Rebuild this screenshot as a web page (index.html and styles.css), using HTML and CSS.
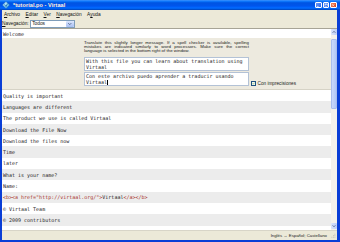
FILE: index.html
```html
<!DOCTYPE html>
<html>
<head>
  <link rel="stylesheet" href="styles.css">
</head>
<body>
  <div class="window">
    <div class="titlebar">
      <svg class="app-icon" viewBox="0 0 8 8">
        <defs>
          <linearGradient id="iconGrad" x1="0" y1="0" x2="1" y2="1">
            <stop offset="0%" stop-color="#e8fbff"/>
            <stop offset="100%" stop-color="#41b4e8"/>
          </linearGradient>
        </defs>
        <path d="M4 0.5 L7.5 4 L4 7.5 L0.5 4 Z" fill="url(#iconGrad)" stroke="#1d6fb8" stroke-width="0.5"/>
        <path d="M2.5 3.5 L4 5.5 L5.6 2.6" fill="none" stroke="#0b4f9a" stroke-width="0.7"/>
      </svg>
      <span class="title">*tutorial.po - Virtaal</span>
      <div class="caption-buttons">
        <span class="cap">
          <svg viewBox="0 0 7 7"><rect x="1.5" y="4.6" width="2.6" height="0.9" fill="#fff"/></svg>
        </span>
        <span class="cap">
          <svg viewBox="0 0 7 7"><rect x="1.6" y="1.6" width="3.8" height="3.8" fill="none" stroke="#fff" stroke-width="0.6"/><rect x="1.6" y="1.4" width="3.8" height="0.9" fill="#fff"/></svg>
        </span>
        <span class="cap close">
          <svg viewBox="0 0 7 7"><path d="M1.8 1.8 L5.2 5.2 M5.2 1.8 L1.8 5.2" stroke="#fff" stroke-width="0.9"/></svg>
        </span>
      </div>
    </div>

    <div class="frame">
      <div class="menubar">
        <span class="menu-item"><u>A</u>rchivo</span>
        <span class="menu-item"><u>E</u>ditar</span>
        <span class="menu-item"><u>V</u>er</span>
        <span class="menu-item"><u>N</u>avegación</span>
        <span class="menu-item">A<u>y</u>uda</span>
      </div>

      <div class="toolbar">
        <span class="nav-label"><u>N</u>avegación:</span>
        <div class="combo">
          <span>Todos</span>
          <span class="combo-drop">
            <svg viewBox="0 0 8 6"><path d="M2.3 2 L4 3.7 L5.7 2" fill="none" stroke="#4d6185" stroke-width="0.9"/></svg>
          </span>
        </div>
      </div>

      <div class="main">
        <div class="unit-list">
          <div class="row first">Welcome</div>

          <div class="editor">
            <div class="editor-col">
              <div class="hint">
                <span class="hint-line full">Translate this slightly longer message. If a spell checker is available, spelling</span>
                <span class="hint-line full">mistakes are indicated similarly to word processors. Make sure the correct</span>
                <span class="hint-line">language is selected in the bottom right of the window.</span>
              </div>
              <div class="textbox source">With this file you can learn about translation using Virtaal</div>
              <div class="textbox target">Con este archivo puedo aprender a traducir usando Virtaal<span class="caret"></span></div>
            </div>
            <label class="fuzzy">
              <span class="checkbox">
                <svg viewBox="0 0 6 6"><path d="M1.2 3 L2.5 4.4 L4.9 1.5" fill="none" stroke="#21a121" stroke-width="0.9"/></svg>
              </span>
              Con imprecisiones
            </label>
          </div>

          <div class="row">Quality is important</div>
          <div class="row alt">Languages are different</div>
          <div class="row">The product we use is called Virtaal</div>
          <div class="row alt">Download the File Now</div>
          <div class="row">Download the files now</div>
          <div class="row alt">Time</div>
          <div class="row">later</div>
          <div class="row alt">What is your name?</div>
          <div class="row">Name:</div>
          <div class="row alt"><span class="tag">&lt;b&gt;&lt;a href="http://virtaal.org/"&gt;</span>Virtaal<span class="tag">&lt;/a&gt;&lt;/b&gt;</span></div>
          <div class="row">© Virtaal Team</div>
          <div class="row alt">© 2009 contributors</div>
        </div>

        <div class="vscroll">
          <span class="scroll-btn">
            <svg viewBox="0 0 6 6"><path d="M1.6 3.8 L3 2.3 L4.4 3.8" fill="none" stroke="#4d6185" stroke-width="0.8"/></svg>
          </span>
          <span class="scroll-thumb"></span>
          <span class="scroll-space"></span>
          <span class="scroll-btn">
            <svg viewBox="0 0 6 6"><path d="M1.6 2.3 L3 3.8 L4.4 2.3" fill="none" stroke="#4d6185" stroke-width="0.8"/></svg>
          </span>
        </div>
      </div>

      <div class="statusbar">
        <span class="status-text">Inglés → Español; Castellano</span>
        <svg class="grip" viewBox="0 0 6 6">
          <rect x="4.5" y="0.8" width="0.8" height="0.8" fill="#b6b3a6"/>
          <rect x="3" y="2.3" width="0.8" height="0.8" fill="#b6b3a6"/>
          <rect x="4.5" y="2.3" width="0.8" height="0.8" fill="#b6b3a6"/>
          <rect x="1.5" y="3.8" width="0.8" height="0.8" fill="#b6b3a6"/>
          <rect x="3" y="3.8" width="0.8" height="0.8" fill="#b6b3a6"/>
          <rect x="4.5" y="3.8" width="0.8" height="0.8" fill="#b6b3a6"/>
        </svg>
      </div>
    </div>
  </div>
</body>
</html>
```

FILE: styles.css
```css
* {
  margin: 0;
  padding: 0;
  box-sizing: border-box;
}

body {
  width: 340px;
  height: 242px;
  overflow: hidden;
  font-family: "Liberation Sans", Arial, sans-serif;
  background: #0a3ed6;
}

.window {
  width: 340px;
  height: 242px;
  display: flex;
  flex-direction: column;
}

/* XP style caption */
.titlebar {
  height: 10px;
  flex-shrink: 0;
  display: flex;
  align-items: center;
  padding: 0 3.5px 0 2px;
  background: linear-gradient(#0058ee 0%, #3593ff 6%, #127dff 12%, #0262ee 20%, #0054e3 30%, #0055eb 56%, #005bf5 66%, #026afe 78%, #0062ef 86%, #0052d6 93%, #0040ab 100%);
}

.app-icon {
  width: 8px;
  height: 8px;
}

.title {
  margin-left: 3px;
  font-size: 5.7px;
  font-weight: 700;
  color: #fff;
  text-shadow: 0.4px 0.4px 0 #0a1f8a;
  white-space: nowrap;
}

.caption-buttons {
  margin-left: auto;
  display: flex;
  gap: 1px;
}

.cap {
  width: 6.5px;
  height: 6.5px;
  border: 0.5px solid #fff;
  border-radius: 1px;
  background: linear-gradient(135deg, #6e9cfa, #2a64e4);
  display: flex;
}

.cap svg {
  width: 100%;
  height: 100%;
}

.cap.close {
  background: linear-gradient(135deg, #f0885e, #d6401a);
}

.frame {
  flex: 1;
  display: flex;
  flex-direction: column;
  border-left: 2px solid #0a3ed6;
  border-right: 3px solid #0a3ed6;
  border-bottom: 2px solid #0a3ed6;
  background: #ece9d8;
}

.menubar {
  height: 9px;
  flex-shrink: 0;
  display: flex;
  align-items: center;
  gap: 5.5px;
  padding-left: 2px;
  font-size: 4.8px;
  color: #111;
}

.toolbar {
  height: 9px;
  flex-shrink: 0;
  display: flex;
  align-items: center;
  gap: 1px;
  font-size: 4.8px;
  color: #111;
}

.combo {
  width: 45px;
  height: 8px;
  border: 1px solid #7f9db9;
  background: #fff;
  display: flex;
  align-items: center;
  padding-left: 1.5px;
}

.combo-drop {
  margin-left: auto;
  width: 7.5px;
  height: 6px;
  border-radius: 1px;
  background: linear-gradient(#dbe6fd, #a9c0f4);
  display: flex;
}

.combo-drop svg {
  width: 100%;
  height: 100%;
}

.main {
  flex: 1;
  display: flex;
  min-height: 0;
  border-top: 1px solid #a7a496;
}

.unit-list {
  flex: 1;
  background: #fff;
  display: flex;
  flex-direction: column;
  overflow: hidden;
}

.row {
  height: 11.3px;
  flex-shrink: 0;
  display: flex;
  align-items: center;
  padding-left: 1px;
  font-family: "DejaVu Sans Mono", monospace;
  font-size: 5px;
  color: #222;
  white-space: pre;
}

.row.first {
  height: 9px;
}

.row.alt {
  background: #ececec;
}

.tag {
  color: #a8322a;
}

.editor {
  height: 52px;
  flex-shrink: 0;
  display: flex;
  padding: 3px 0 0 82px;
  background: #edeadf;
  border-bottom: 1px solid #d6d3c6;
}

.editor-col {
  width: 165px;
  display: flex;
  flex-direction: column;
}

.hint {
  height: 12px;
  margin-bottom: 4px;
  font-size: 4.4px;
  line-height: 4px;
  color: #1a1a1a;
}

.hint-line {
  display: block;
  white-space: nowrap;
}

.hint-line.full {
  text-align: justify;
  text-align-last: justify;
}

.textbox {
  height: 14px;
  padding: 0 1px;
  border: 1px solid #b3c2d6;
  background: #fff;
  font-family: "DejaVu Sans Mono", monospace;
  font-size: 5px;
  line-height: 6px;
  color: #222;
}

.textbox.target {
  margin-top: 1px;
}

.caret {
  display: inline-block;
  width: 0.5px;
  height: 5px;
  background: #000;
  vertical-align: -1px;
}

.fuzzy {
  align-self: flex-end;
  margin: 0 0 3px 2px;
  display: flex;
  align-items: center;
  gap: 1.5px;
  font-size: 4.7px;
  color: #222;
  white-space: nowrap;
}

.checkbox {
  width: 5px;
  height: 5px;
  border: 0.5px solid #1c5180;
  background: #f4f4ee;
  display: flex;
}

.checkbox svg {
  width: 100%;
  height: 100%;
}

.vscroll {
  width: 6px;
  flex-shrink: 0;
  display: flex;
  flex-direction: column;
  background: #f4f2ec;
  padding-bottom: 1px;
}

.scroll-btn {
  height: 6px;
  flex-shrink: 0;
  border-radius: 1px;
  background: linear-gradient(90deg, #dbe5fc, #bccdf7);
  display: flex;
}

.scroll-btn svg {
  width: 100%;
  height: 100%;
}

.scroll-thumb {
  height: 70px;
  margin-top: 4px;
  border-radius: 1px;
  background: linear-gradient(90deg, #c9d8fc, #b2c7f7);
  border: 0.5px solid #a9bdee;
}

.scroll-space {
  flex: 1;
}

.statusbar {
  height: 10px;
  flex-shrink: 0;
  display: flex;
  align-items: center;
  justify-content: flex-end;
  padding-right: 1px;
  border-top: 1px solid #d8d5c8;
  font-size: 4.3px;
  color: #222;
}

.grip {
  width: 6px;
  height: 6px;
  margin-left: 3px;
  align-self: flex-end;
  margin-bottom: 1px;
}
```
